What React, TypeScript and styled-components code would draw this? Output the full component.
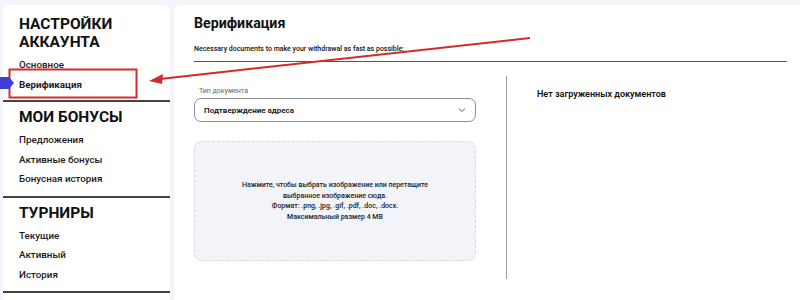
import styled, { createGlobalStyle } from "styled-components";

const GlobalStyle = createGlobalStyle`
  html, body {
    margin: 0;
    padding: 0;
    background: #f3f5fb;
    font-family: "Roboto", "Noto Sans", sans-serif;
    color: #111;
  }
`;

const sections = [
  { title: ["НАСТРОЙКИ", "АККАУНТА"], items: ["Основное", "Верификация"] },
  { title: ["МОИ БОНУСЫ"], items: ["Предложения", "Активные бонусы", "Бонусная история"] },
  { title: ["ТУРНИРЫ"], items: ["Текущие", "Активный", "История"] },
];

export default function App() {
  return (
    <>
      <GlobalStyle />
      <Page>
        <Sidebar>
          {sections.map((s, i) => (
            <Section key={i}>
              <SectionTitle>
                {s.title.map((t) => (
                  <div key={t}>{t}</div>
                ))}
              </SectionTitle>
              {s.items.map((it) => (
                <NavItem key={it} $active={it === "Верификация"}>
                  {it}
                </NavItem>
              ))}
            </Section>
          ))}
        </Sidebar>

        <Main>
          <Title>Верификация</Title>
          <Subtitle>Necessary documents to make your withdrawal as fast as possible:</Subtitle>
          <Columns>
            <LeftCol>
              <FieldLabel>Тип документа</FieldLabel>
              <Select>
                <span>Подтверждение адреса</span>
                <svg width="10" height="10" viewBox="0 0 10 10">
                  <path d="M2 3.5 L5 6.5 L8 3.5" fill="none" stroke="#9aa0aa" strokeWidth="1.1" />
                </svg>
              </Select>
              <DropZone>
                <div>Нажмите, чтобы выбрать изображение или перетащите</div>
                <div>выбранное изображение сюда.</div>
                <div>Формат: .png, .jpg, .gif, .pdf, .doc, .docx.</div>
                <div>Максимальный размер 4 MB</div>
              </DropZone>
            </LeftCol>
            <RightCol>
              <Empty>Нет загруженных документов</Empty>
            </RightCol>
          </Columns>
        </Main>

        {/* аннотации поверх скриншота */}
        <Overlay width="800" height="300" viewBox="0 0 800 300">
          <rect x="9.5" y="69.5" width="127" height="28" fill="none" stroke="#d42a2a" strokeWidth="2" />
          <path d="M0 77 L9 77 L14 83 L9 89 L0 89 Z" fill="#3b3fd8" />
          <line x1="530" y1="38" x2="160" y2="79" stroke="#d42a2a" strokeWidth="2" />
          <path d="M149 81 L163 74 L162 84 Z" fill="#d42a2a" />
        </Overlay>
      </Page>
    </>
  );
}

const Page = styled.div`
  position: relative;
  display: flex;
  gap: 4px;
  padding: 5px 0 0 3px;
  height: 295px;
  overflow: hidden;
`;

const Sidebar = styled.aside`
  width: 167px;
  flex-shrink: 0;
  background: #fff;
  border-radius: 6px 6px 0 0;
`;

const Section = styled.div`
  padding: 6px 0 7px 16px;
  border-bottom: 2px solid #444;

  &:first-child {
    padding-top: 10px;
    padding-bottom: 6px;
  }
`;

const SectionTitle = styled.div`
  font-size: 15.5px;
  font-weight: 700;
  line-height: 18px;
  margin-bottom: 4px;
`;

const NavItem = styled.div<{ $active?: boolean }>`
  font-size: 9.8px;
  font-weight: ${(p) => (p.$active ? 700 : 500)};
  line-height: 19.5px;
  color: #1a1a1a;
`;

const Main = styled.main`
  flex: 1;
  background: #fff;
  padding: 8px 13px 0 20px;
  border-radius: 6px 0 0 0;
`;

const Title = styled.h1`
  margin: 0;
  font-size: 14.2px;
  font-weight: 700;
  line-height: 20px;
`;

const Subtitle = styled.div`
  margin-top: 12px;
  font-size: 7px;
  font-weight: 500;
  padding-bottom: 8px;
  border-bottom: 1.5px solid #555;
`;

const Columns = styled.div`
  display: flex;
  padding-top: 14px;
`;

const LeftCol = styled.div`
  width: 282px;
  padding-top: 11px;
`;

const FieldLabel = styled.div`
  font-size: 7px;
  color: #666;
  padding-left: 5px;
  margin-bottom: 3px;
`;

const Select = styled.div`
  height: 22px;
  border: 1px solid #8a8f98;
  border-radius: 7px;
  display: flex;
  align-items: center;
  justify-content: space-between;
  padding: 0 8px 0 9px;
  font-size: 8px;
  font-weight: 600;
`;

const DropZone = styled.div`
  margin-top: 19px;
  height: 118px;
  background: #f2f4fa;
  border: 1px dashed #d6dae3;
  border-radius: 8px;
  display: flex;
  flex-direction: column;
  align-items: center;
  justify-content: center;
  font-size: 7px;
  line-height: 10.5px;
  font-weight: 500;
  color: #222;
`;

const RightCol = styled.div`
  margin-left: 30px;
  border-left: 1.5px solid #999;
  padding-left: 30px;
  height: 203px;
  flex: 1;
`;

const Empty = styled.div`
  margin-top: 13px;
  font-size: 9px;
  font-weight: 600;
`;

const Overlay = styled.svg`
  position: absolute;
  left: 0;
  top: 0;
  pointer-events: none;
`;
